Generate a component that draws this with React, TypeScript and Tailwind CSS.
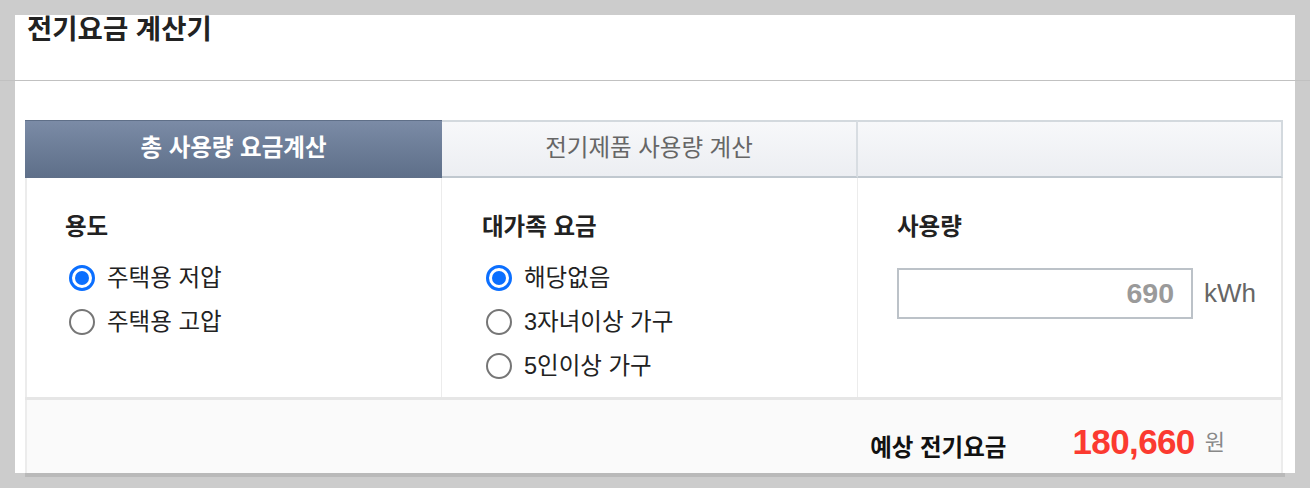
import React from 'react';

const font = "font-['Liberation_Sans','Noto_Sans_CJK_KR',sans-serif]";

const Radio: React.FC<{ checked?: boolean; label: string }> = ({ checked, label }) => (
  <div className="flex h-[44px] items-center">
    <span
      className={
        checked
          ? 'ml-[4px] flex h-[26px] w-[26px] items-center justify-center rounded-full border-[3px] border-[#0b6fff] bg-white'
          : 'ml-[4px] flex h-[26px] w-[26px] items-center justify-center rounded-full border-2 border-[#767676] bg-white'
      }
    >
      {checked && <span className="h-[14px] w-[14px] rounded-full bg-[#0b6fff]" />}
    </span>
    <span className="ml-[12px] text-[23.5px] leading-[30px] text-[#222]">{label}</span>
  </div>
);

const App: React.FC = () => {
  return (
    <div className={`relative h-[488px] w-[1310px] overflow-hidden bg-[#cccccc] ${font}`}>
      <div className="px-[15px] pt-[15px]">
        {/* header */}
        <div className="h-[65px] bg-white pl-[12px]">
          <h1 className="text-[27.5px] font-bold leading-[30px] text-[#222]">전기요금 계산기</h1>
        </div>
      </div>
      <div className="h-px w-full bg-black/[0.05]" />
      <div className="px-[15px]">
        <div className="h-[392px] bg-white pl-[10px] pr-[12px] pt-[39px]">
          {/* tabs */}
          <div className="grid h-[58px] grid-cols-[417px_416px_425px]">
            <div className="flex items-center justify-center border-t border-b border-[#5f6f88] bg-gradient-to-b from-[#7b8ba6] to-[#5e6f89] text-[23.5px] font-bold text-white">
              총 사용량 요금계산
            </div>
            <div className="flex items-center justify-center border-t-2 border-b-2 border-r-2 border-t-[#d3d9de] border-b-[#c0c8cf] border-r-[#d8dde2] bg-gradient-to-b from-[#f7f8fa] to-[#eceef2] text-[23.5px] text-[#666]">
              전기제품 사용량 계산
            </div>
            <div className="border-t-2 border-b-2 border-r-2 border-t-[#d3d9de] border-b-[#c0c8cf] border-r-[#d3d9de] bg-gradient-to-b from-[#f7f8fa] to-[#eceef2]" />
          </div>
          {/* body */}
          <div className="grid h-[222px] grid-cols-[417px_416px_425px] border-b-[3px] border-[#e6e6e6]">
            <div className="border-l-2 border-r border-[#ececec] pl-[38px] pt-[34px]">
              <div className="text-[23.5px] font-bold leading-[30px] text-[#222]">용도</div>
              <div className="mt-[14px]">
                <Radio checked label="주택용 저압" />
                <Radio label="주택용 고압" />
              </div>
            </div>
            <div className="border-r border-[#ececec] pl-[40px] pt-[34px]">
              <div className="text-[23.5px] font-bold leading-[30px] text-[#222]">대가족 요금</div>
              <div className="mt-[14px]">
                <Radio checked label="해당없음" />
                <Radio label="3자녀이상 가구" />
                <Radio label="5인이상 가구" />
              </div>
            </div>
            <div className="border-r-2 border-[#e6e6e6] pl-[39px] pt-[34px]">
              <div className="text-[23.5px] font-bold leading-[30px] text-[#222]">사용량</div>
              <div className="mt-[26px] flex items-center">
                <div className="flex h-[51px] w-[296px] items-center justify-end border-2 border-[#bcc2c8] pr-[17px] text-[28.5px] font-bold text-[#9a9a9a]">
                  690
                </div>
                <span className="ml-[11px] text-[26px] text-[#666]">kWh</span>
              </div>
            </div>
          </div>
          {/* footer */}
          <div className="flex h-[73px] items-center justify-end border-l-2 border-r-2 border-[#ececec] bg-[#fafafa] pr-[56px]">
            <span className="mt-[22px] text-[23.5px] font-bold leading-[30px] text-[#111]">예상 전기요금</span>
            <span className="ml-[66px] mt-[10px] text-[35px] font-bold leading-[40px] tracking-[-0.6px] text-[#fb3a30]">180,660</span>
            <span className="ml-[10px] mt-[12px] text-[22px] leading-[30px] text-[#888]">원</span>
          </div>
        </div>
      </div>
      <div className="ml-[25px] h-[4px] w-[1260px] bg-[#b9b9b9]" />
    </div>
  );
};

export default App;
